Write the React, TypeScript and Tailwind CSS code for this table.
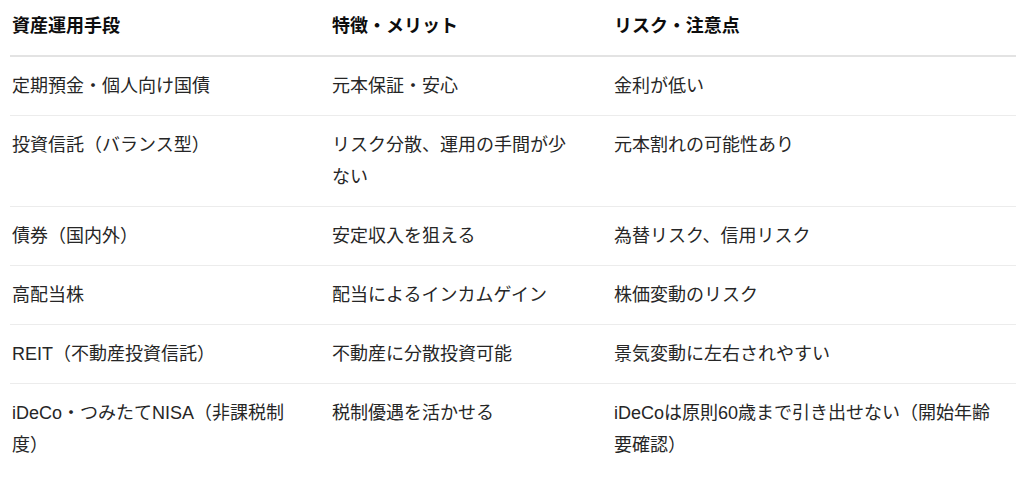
const rows: [string, string, string][] = [
  ["定期預金・個人向け国債", "元本保証・安心", "金利が低い"],
  ["投資信託（バランス型）", "リスク分散、運用の手間が少ない", "元本割れの可能性あり"],
  ["債券（国内外）", "安定収入を狙える", "為替リスク、信用リスク"],
  ["高配当株", "配当によるインカムゲイン", "株価変動のリスク"],
  ["REIT（不動産投資信託）", "不動産に分散投資可能", "景気変動に左右されやすい"],
  [
    "iDeCo・つみたてNISA（非課税制度）",
    "税制優遇を活かせる",
    "iDeCoは原則60歳まで引き出せない（開始年齢要確認）",
  ],
];

export default function App() {
  return (
    <div
      className="min-h-[477px] w-full bg-white"
      style={{ fontFamily: '"Liberation Sans", "Noto Sans CJK JP", sans-serif' }}
    >
      <table className="ml-[10px] w-[1006px] table-fixed border-collapse text-left text-[18px] leading-8">
        <colgroup>
          <col className="w-[306px]" />
          <col className="w-[282px]" />
          <col className="w-[418px]" />
        </colgroup>
        <thead>
          <tr>
            <th className="border-b-2 border-[#e3e3e3] pt-[10px] pb-[13px] pl-[2px] pr-4 align-top font-bold text-[#0d0d0d]">
              資産運用手段
            </th>
            <th className="border-b-2 border-[#e3e3e3] pt-[10px] pb-[13px] px-4 align-top font-bold text-[#0d0d0d]">
              特徴・メリット
            </th>
            <th className="border-b-2 border-[#e3e3e3] pt-[10px] pb-[13px] px-4 align-top font-bold text-[#0d0d0d]">
              リスク・注意点
            </th>
          </tr>
        </thead>
        <tbody>
          {rows.map((r, i) => {
            const last = i === rows.length - 1;
            const border = last ? "" : "border-b border-[#ececec]";
            return (
              <tr key={i}>
                <td className={`${border} pt-[13px] pb-[13px] pl-[2px] pr-4 align-top text-[#262626]`}>{r[0]}</td>
                <td className={`${border} pt-[13px] pb-[13px] px-4 align-top text-[#262626]`}>{r[1]}</td>
                <td className={`${border} pt-[13px] pb-[13px] px-4 align-top text-[#262626]`}>{r[2]}</td>
              </tr>
            );
          })}
        </tbody>
      </table>
    </div>
  );
}
